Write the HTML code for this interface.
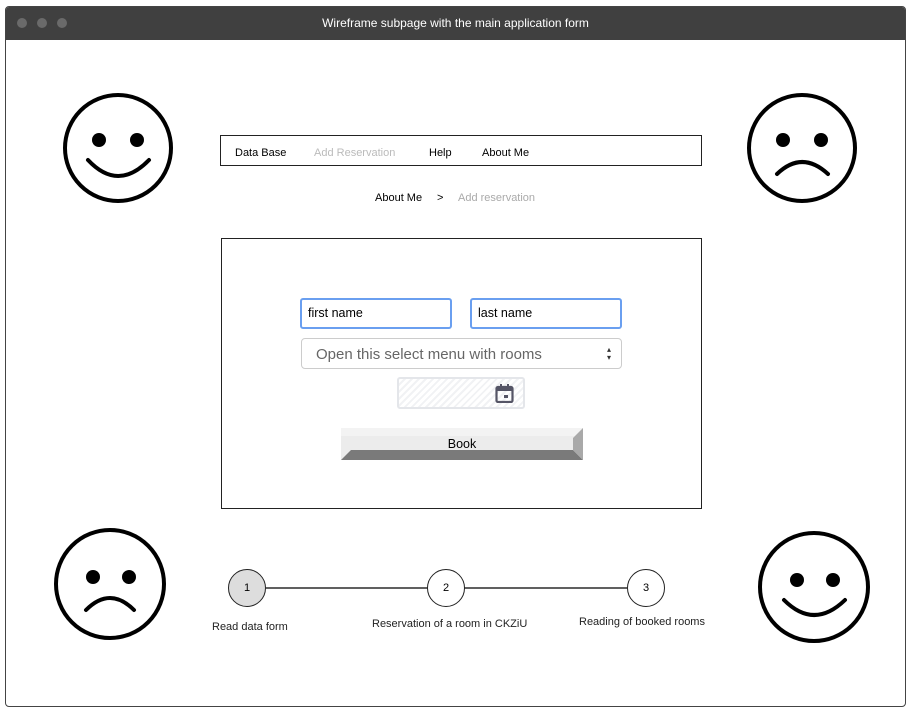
<!DOCTYPE html>
<html><head><style>
body{margin:0;width:911px;height:712px;background:#fff;font-family:"Liberation Sans",sans-serif;position:relative;overflow:hidden}
.win{position:absolute;left:5px;top:6px;width:899px;height:699px;border:1px solid #444;border-radius:4px;overflow:hidden}
.bar{height:33px;background:#404040;color:#fff;font-size:12px;text-align:center;line-height:33px}
.dot{position:absolute;top:11px;width:10px;height:10px;border-radius:50%;background:#6a6a6a}
.a{position:absolute}
.nav{left:220px;top:135px;width:480px;height:29px;border:1px solid #222;font-size:11px}
.nav span{position:absolute;top:11px}
.form{left:221px;top:238px;width:479px;height:269px;border:1px solid #222}
.inp{position:absolute;border:2px solid #6a9ff0;border-radius:3px;font-size:12.5px;line-height:27px;padding-left:6px;box-sizing:border-box;height:31px}
.c{position:absolute;width:36px;height:36px;border:1.5px solid #222;border-radius:50%;font-size:11px;text-align:center;line-height:36px;background:#fff}
.lbl{position:absolute;font-size:11px;color:#222}
</style></head><body>
<div class="win">
<div class="bar">Wireframe subpage with the main application form</div>
<div class="dot" style="left:11px"></div><div class="dot" style="left:31px"></div><div class="dot" style="left:51px"></div>
</div>
<svg class="a" style="left:0;top:0" width="911" height="712">
<g fill="none" stroke="#000" stroke-width="4">
<circle cx="118" cy="148" r="53"/><circle cx="802" cy="148" r="53"/>
<circle cx="110" cy="584" r="54"/><circle cx="814" cy="587" r="54"/>
<path d="M88 160 Q118 192 149 160" stroke-linecap="round"/>
<path d="M777 174 Q802 150 828 174" stroke-linecap="round"/>
<path d="M86 610 Q110 586 134 610" stroke-linecap="round"/>
<path d="M784 600 Q814 630 845 600" stroke-linecap="round"/>
</g>
<g fill="#000">
<circle cx="99" cy="140" r="7"/><circle cx="137" cy="140" r="7"/>
<circle cx="783" cy="140" r="7"/><circle cx="821" cy="140" r="7"/>
<circle cx="93" cy="577" r="7"/><circle cx="129" cy="577" r="7"/>
<circle cx="797" cy="580" r="7"/><circle cx="833" cy="580" r="7"/>
</g>
<line x1="266" y1="588" x2="627" y2="588" stroke="#000" stroke-width="1.2"/>
</svg>
<div class="a nav">
<span style="left:14px">Data Base</span><span style="left:93px;color:#bbb">Add Reservation</span><span style="left:208px">Help</span><span style="left:261px">About Me</span>
</div>
<div class="a" style="left:375px;top:192px;font-size:11px">About Me</div>
<div class="a" style="left:437px;top:192px;font-size:11px">&gt;</div>
<div class="a" style="left:458px;top:192px;font-size:11px;color:#aaa">Add reservation</div>
<div class="a form"></div>
<div class="inp" style="left:300px;top:298px;width:152px">first name</div>
<div class="inp" style="left:470px;top:298px;width:152px">last name</div>
<div class="a" style="left:301px;top:338px;width:321px;height:31px;border:1px solid #ccc;border-radius:4px;font-size:15px;color:#666;line-height:31px;padding-left:14px;box-sizing:border-box">Open this select menu with rooms<span style="position:absolute;right:10px;top:7px;font-size:8px;color:#333;line-height:8px">&#x25B4;<br>&#x25BE;</span></div>
<div class="a" style="left:397px;top:377px;width:128px;height:32px;border:2px solid #e4e6ea;border-radius:3px;box-sizing:border-box;background:repeating-linear-gradient(135deg,#fff 0 3px,#f1f2f4 3px 5px)">
<svg style="position:absolute;left:96px;top:5px" width="19" height="19"><rect x="1.5" y="3" width="16" height="15" rx="1.5" fill="none" stroke="#556" stroke-width="2.2"/><rect x="1.5" y="3" width="16" height="4" fill="#556"/><rect x="5" y="0" width="2" height="4" fill="#556"/><rect x="12" y="0" width="2" height="4" fill="#556"/><rect x="9" y="11" width="4" height="3" fill="#556"/></svg></div>
<svg class="a" style="left:341px;top:428px" width="242" height="32">
<rect width="242" height="32" fill="#ececec"/>
<rect width="242" height="8" fill="#f3f3f3"/>
<polygon points="0,32 10,22 232,22 242,32" fill="#7a7a7a"/>
<polygon points="242,0 242,32 232,22 232,10" fill="#a9a9a9"/>
<text x="121" y="20" text-anchor="middle" font-family="Liberation Sans" font-size="12.5">Book</text>
</svg>
<div class="c" style="left:228px;top:569px;background:#ddd">1</div>
<div class="c" style="left:427px;top:569px">2</div>
<div class="c" style="left:627px;top:569px">3</div>
<div class="lbl" style="left:212px;top:621px">Read data form</div>
<div class="lbl" style="left:372px;top:618px">Reservation of a room in CKZiU</div>
<div class="lbl" style="left:579px;top:616px">Reading of booked rooms</div>
</body></html>
